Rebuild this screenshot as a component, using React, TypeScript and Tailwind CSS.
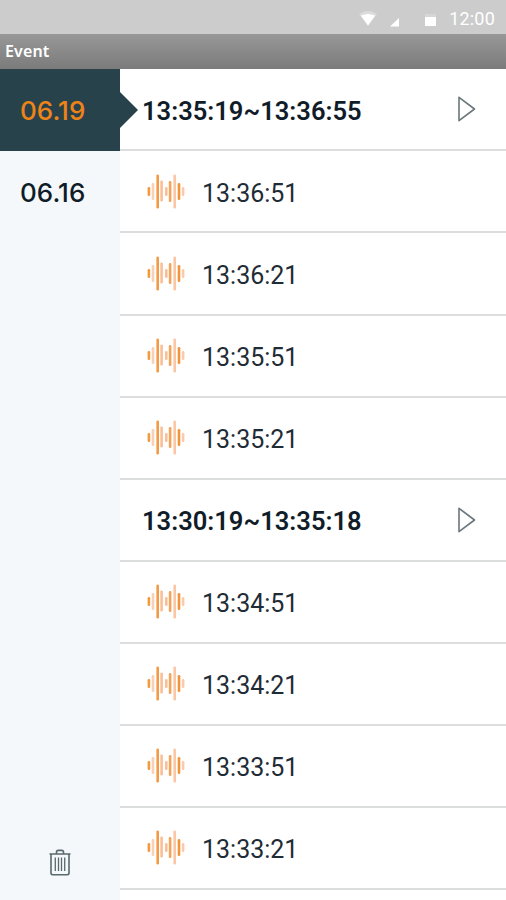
interface EventRow {
  time: string;
  isGroup?: boolean;
}

const DATES = ['06.19', '06.16'];

const ROWS: EventRow[] = [
  { time: '13:35:19~13:36:55', isGroup: true },
  { time: '13:36:51' },
  { time: '13:36:21' },
  { time: '13:35:51' },
  { time: '13:35:21' },
  { time: '13:30:19~13:35:18', isGroup: true },
  { time: '13:34:51' },
  { time: '13:34:21' },
  { time: '13:33:51' },
  { time: '13:33:21' },
];

// [x, top, height, color]
const BARS: [number, number, number, string][] = [
  [0.8, 13, 9, '#f29a3c'],
  [4.9, 9, 17, '#fad0b6'],
  [9.6, 0.5, 34, '#f29a45'],
  [13.5, 6.5, 21, '#f9bf98'],
  [18.2, 13, 9, '#f9bf98'],
  [22, 7, 21, '#f3a458'],
  [26.6, 0.5, 34, '#fbc6a6'],
  [30.9, 9, 17, '#f2953a'],
  [35, 13, 9, '#fac9ae'],
];

function WaveIcon() {
  return (
    <svg className="w-[38px] h-[35px] shrink-0" viewBox="0 0 38 35">
      {BARS.map(([x, y, height, color]) => (
        <rect key={x} x={x - 0.2} y={y} width="2.6" height={height} rx="1.2" fill={color} />
      ))}
    </svg>
  );
}

function PlayIcon() {
  return (
    <svg className="w-5 h-7" viewBox="0 0 20 28" fill="none">
      <path d="M2 2.3V25.7L17.5 14Z" stroke="#6b777b" strokeWidth="1.6" strokeLinejoin="round" />
    </svg>
  );
}

function TrashIcon() {
  return (
    <svg className="w-[22px] h-[27px]" viewBox="0 0 22 27" fill="none" stroke="#5a696d" strokeWidth="1.6">
      <path d="M0.5 5H21.5M7.5 4.5V3.2Q7.5 1.4 9.2 1.4H12.8Q14.5 1.4 14.5 3.2V4.5" />
      <path d="M2 5V24Q2 25.7 3.7 25.7H18.3Q20 25.7 20 24V5" />
      <path d="M6.3 8.5V22M9.5 8.5V22M12.5 8.5V22M15.7 8.5V22" strokeWidth="1.3" />
    </svg>
  );
}

function StatusBar() {
  return (
    <div className="h-[34px] shrink-0 bg-[#cccccc] flex items-center justify-end pr-[11px] pt-[3px] text-white">
      <svg className="w-[78px] h-4 mr-3" viewBox="0 0 78 16" fill="#ffffff">
        <path d="M0 3Q9 -3 18 3L9 15Z" opacity="0.3" />
        <path d="M1.8 4.5Q9 1.5 16.2 4.5L9 14.5Z" />
        <path d="M31 15.5H40V7Z" />
        <path d="M66 3H77V6H66Z" opacity="0.2" />
        <path d="M66 6H77V15H66Z" />
      </svg>
      <span className="text-[18px] leading-5 tracking-[0.2px]">12:00</span>
    </div>
  );
}

export default function App() {
  return (
    <div className="w-full h-[900px] overflow-hidden flex flex-col bg-white font-[Roboto,sans-serif]">
      <StatusBar />
      <header className="h-[35px] shrink-0 bg-linear-to-b from-[#989898] to-[#7b7b7b] flex items-center pl-[5px] pb-[2px] text-white">
        <h1 className="font-['Noto_Sans',sans-serif] text-[16px] font-semibold leading-5 tracking-[0.15px]">Event</h1>
      </header>

      <div className="flex-1 min-h-0 flex">
        {/* Dates */}
        <aside className="w-[120px] shrink-0 bg-[#f5f8fa] flex flex-col">
          {DATES.map((date, i) => (
            <button
              key={date}
              className={`relative h-[81.5px] shrink-0 pl-5 pt-[2px] text-left font-[Inter,sans-serif] text-[26px] font-medium tracking-[0.05px] ${
                i === 0 ? 'bg-[#28424c] text-[#ee8318]' : 'text-[#101d29]'
              }`}
            >
              {date}
              {i === 0 && (
                <svg className="absolute left-[119px] top-[23px] w-5 h-[36px]" viewBox="0 0 20 36">
                  <path d="M0 0H1L19 18L1 36H0Z" fill="#28424c" />
                </svg>
              )}
            </button>
          ))}
          <button className="mt-auto mb-6 self-center">
            <TrashIcon />
          </button>
        </aside>

        {/* Events */}
        <ul className="flex-1 pt-[0.4px]">
          {ROWS.map((row) => (
            <li
              key={row.time}
              className="h-[82.06px] flex items-center border-b-2 border-[#dcdddd] text-[#101d29]"
            >
              {row.isGroup ? (
                <>
                  <span className="pl-[22px] pt-[3px] text-[25.5px] font-semibold tracking-[0.02px]">{row.time}</span>
                  <button className="ml-auto mr-[29px]">
                    <PlayIcon />
                  </button>
                </>
              ) : (
                <div className="flex items-center pl-[27px] gap-[17px]">
                  <WaveIcon />
                  <span className="pt-[4px] text-[25px] text-[#1f2c36]">{row.time}</span>
                </div>
              )}
            </li>
          ))}
        </ul>
      </div>
    </div>
  );
}
